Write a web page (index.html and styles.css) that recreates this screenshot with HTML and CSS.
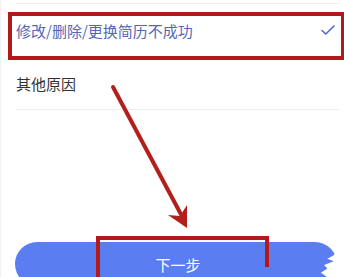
FILE: index.html
```html
<!DOCTYPE html>
<html lang="zh-CN">
<head>
<meta charset="utf-8">
<link rel="stylesheet" href="styles.css">
</head>
<body>
<div class="page">
  <div class="list">
    <div class="option selected">
      <span class="label">修改/删除/更换简历不成功</span>
      <svg class="check" width="14" height="10" viewBox="0 0 14 10"><path d="M1 5.5 L4.8 9 L13 1" fill="none" stroke="currentColor" stroke-width="1.6" stroke-linecap="round" stroke-linejoin="round"/></svg>
    </div>
    <div class="option">
      <span class="label">其他原因</span>
    </div>
  </div>
  <div class="actions">
    <button class="next">下一步</button>
  </div>
  <svg class="annot" width="344" height="277" viewBox="0 0 344 277">
    <rect x="9" y="14" width="333" height="44" fill="none" stroke="#b3191b" stroke-width="4"/>
    <line x1="112" y1="87" x2="183" y2="220" stroke="#b3201c" stroke-width="4" stroke-linecap="round"/>
    <polygon points="186,228 167,215 179,216 186,205" fill="#b3201c"/>
    <path d="M97 280 V238 H266 V267" fill="none" stroke="#b3191b" stroke-width="4"/>
  </svg>
</div>
</body>
</html>
```
FILE: styles.css
```css
html, body {
  margin: 0;
  padding: 0;
  background: #fff;
}
.page {
  position: relative;
  width: 344px;
  height: 277px;
  overflow: hidden;
  font-family: "Noto Sans CJK SC", "Noto Sans", sans-serif;
  border-left: 1px solid #f2f2f2;
  box-sizing: border-box;
}
.list {
  margin: 3px 5px 0 14px;
  border-top: 1px solid #efefef;
}
.option {
  height: 52px;
  display: flex;
  align-items: center;
  justify-content: space-between;
  border-bottom: 1px solid #efefef;
  font-size: 15px;
  color: #333;
}
.option .label {
  padding-left: 1px;
}
.option.selected {
  color: #5568b3;
}
.check {
  color: #5568c0;
  margin-right: 4px;
}
.actions {
  margin-top: 132px;
  padding-left: 14px;
}
.next {
  display: block;
  width: 322px;
  height: 44px;
  border: none;
  border-radius: 22px;
  background: #5a7ef1;
  color: #fff;
  font-family: "Noto Sans CJK SC", sans-serif;
  font-size: 15px;
  padding: 0;
  padding-left: 4px;
  clip-path: polygon(0 0, 97% 0, 100% 20%, 99% 30%, 97% 38%, 99% 44%, 96% 52%, 97% 60%, 95% 70%, 97% 80%, 96% 100%, 0 100%);
}
.annot {
  position: absolute;
  left: 0;
  top: 0;
  pointer-events: none;
}
```
